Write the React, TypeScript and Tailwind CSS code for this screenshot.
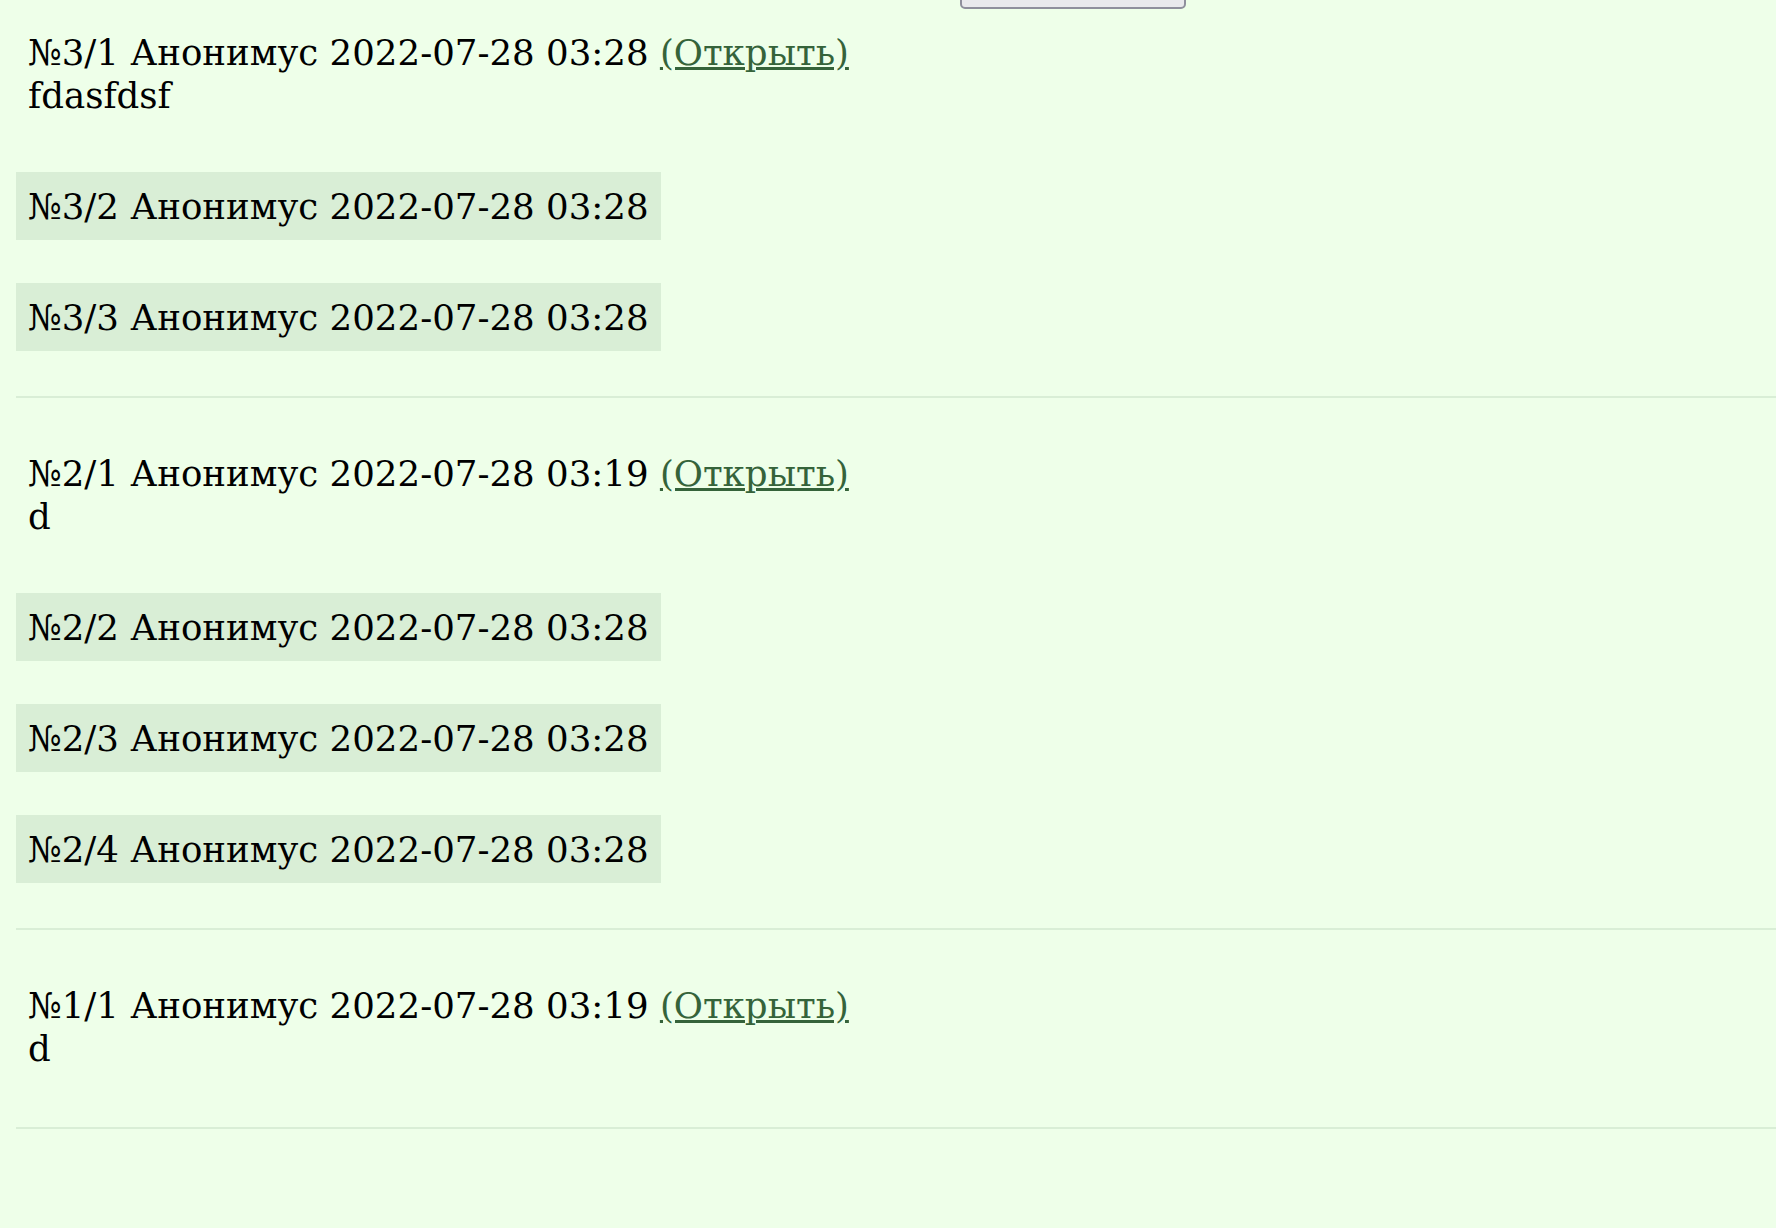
type Reply = { id: string; date: string };

type Thread = {
  id: string;
  date: string;
  text: string;
  replies: Reply[];
};

const threads: Thread[] = [
  {
    id: "3/1",
    date: "2022-07-28 03:28",
    text: "fdasfdsf",
    replies: [
      { id: "3/2", date: "2022-07-28 03:28" },
      { id: "3/3", date: "2022-07-28 03:28" },
    ],
  },
  {
    id: "2/1",
    date: "2022-07-28 03:19",
    text: "d",
    replies: [
      { id: "2/2", date: "2022-07-28 03:28" },
      { id: "2/3", date: "2022-07-28 03:28" },
      { id: "2/4", date: "2022-07-28 03:28" },
    ],
  },
  {
    id: "1/1",
    date: "2022-07-28 03:19",
    text: "d",
    replies: [],
  },
];

function ThreadBlock({ thread }: { thread: Thread }) {
  return (
    <div className="flex flex-col">
      <div className="flex flex-col gap-[43px]">
        <div className="px-3 py-[12px]">
          <div>
            №{thread.id} Анонимус {thread.date}{" "}
            <a href="#" className="text-[#35633a] underline">
              (Открыть)
            </a>
          </div>
          <div>{thread.text}</div>
        </div>

        {thread.replies.map((r) => (
          <div key={r.id} className="w-fit bg-[#d9eed6] px-3 py-[12.5px]">
            №{r.id} Анонимус {r.date}
          </div>
        ))}
      </div>

      <div className="mt-[45px] mb-[42px] h-[2px] bg-[#d9eed6]" />
    </div>
  );
}

export default function App() {
  return (
    <div
      className="min-h-screen bg-[#eeffe9] text-[35.6px] leading-[43px] text-black"
      style={{ fontFamily: '"DejaVu Serif", "Liberation Serif", serif' }}
    >
      {/* scrolled page: only the bottom edge of the form button shows */}
      <div className="h-[9px] overflow-hidden">
        <div className="ml-[960px] mt-[-31px] flex h-[40px] w-[226px] items-end rounded-[5px] border-2 border-[#8f8f9d] bg-[#e9e9ed]">
          <span className="mb-[29px] ml-[86px] h-[2px] w-[3px] bg-[#111]" />
        </div>
      </div>

      <div className="ml-4 pt-[10px]">
        {threads.map((t) => (
          <ThreadBlock key={t.id} thread={t} />
        ))}
      </div>
    </div>
  );
}
